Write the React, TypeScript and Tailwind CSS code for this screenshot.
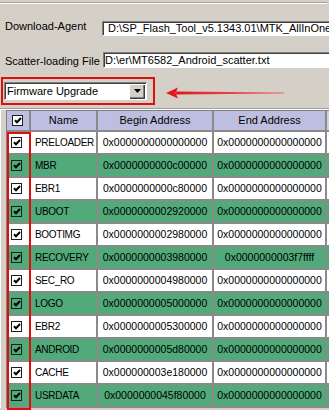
import React from "react";

const partitions: [string, string, string][] = [
  ["PRELOADER", "0x0000000000000000", "0x0000000000000000"],
  ["MBR", "0x0000000000c00000", "0x0000000000000000"],
  ["EBR1", "0x0000000000c80000", "0x0000000000000000"],
  ["UBOOT", "0x0000000002920000", "0x0000000000000000"],
  ["BOOTIMG", "0x0000000002980000", "0x0000000000000000"],
  ["RECOVERY", "0x0000000003980000", "0x0000000003f7ffff"],
  ["SEC_RO", "0x0000000004980000", "0x0000000000000000"],
  ["LOGO", "0x0000000005000000", "0x0000000000000000"],
  ["EBR2", "0x0000000005300000", "0x0000000000000000"],
  ["ANDROID", "0x0000000005d80000", "0x0000000000000000"],
  ["CACHE", "0x000000003e180000", "0x0000000000000000"],
  ["USRDATA", "0x0000000045f80000", "0x0000000000000000"],
];

const Check: React.FC<{ white?: boolean }> = ({ white }) => (
  <span
    className={`flex h-[11px] w-[11px] items-center justify-center border border-[#1c1c1c] ${
      white ? "bg-white" : ""
    }`}
  >
    <svg width="8" height="7" viewBox="0 0 8 7">
      <polyline
        points="1,3.2 3,5.3 7,1"
        fill="none"
        stroke="#000"
        strokeWidth="2"
      />
    </svg>
  </span>
);

const Field: React.FC<{ text: string; className?: string }> = ({
  text,
  className = "",
}) => (
  <div
    className={`flex w-[240px] shrink-0 items-center overflow-hidden whitespace-nowrap border border-t-[#808080] border-l-[#808080] border-b-white border-r-white bg-white shadow-[inset_1px_1px_0_#404040] ${className}`}
  >
    {text}
  </div>
);

const App: React.FC = () => {
  return (
    <div className="relative h-[410px] w-[329px] overflow-hidden bg-[#d4d0c8] font-['Liberation_Sans',Arial,sans-serif] text-[11px] leading-none text-black">
      <div className="mt-[2px] mr-[2px] h-[2px] border-t border-t-[#a0a0a0] border-b border-b-white" />

      {/* download agent */}
      <div className="mt-[17px] flex items-center">
        <div className="w-[102px] shrink-0 pb-[4px] pl-[5px]">Download-Agent</div>
        <Field
          className="h-[15px] pl-[5px]"
          text={"D:\\SP_Flash_Tool_v5.1343.01\\MTK_AllInOne_DA.bin"}
        />
      </div>

      {/* scatter file */}
      <div className="mt-[16px] flex items-center">
        <div className="w-[103px] shrink-0 pt-[3px] pl-[5px]">Scatter-loading File</div>
        <Field
          className="h-[16px] pl-[1px]"
          text={"D:\\er\\MT6582_Android_scatter.txt"}
        />
      </div>

      {/* mode select */}
      <div className="mt-[9px] flex items-start">
        <div className="ml-[1px] h-[28px] w-[154px] border-2 border-[#e00d0d] pt-[3px] pl-[1px]">
          <div className="flex h-[18px] w-[143px] items-center justify-between border border-t-[#808080] border-l-[#808080] border-b-white border-r-white bg-white pl-[1px] shadow-[inset_1px_1px_0_#404040]">
            <span className="pl-[1px]">Firmware Upgrade</span>
            <span className="mr-[1px] flex h-[15px] w-[16px] items-center justify-center bg-[#d4d0c8] shadow-[inset_1px_1px_0_#ffffff,inset_-1px_-1px_0_#404040,inset_-2px_-2px_0_#808080]">
              <svg width="7" height="4" viewBox="0 0 7 4">
                <polygon points="0,0 7,0 3.5,4" fill="#000" />
              </svg>
            </span>
          </div>
        </div>
        <svg className="mt-[10px] ml-[11px]" width="118" height="12" viewBox="0 0 118 12">
          <defs>
            <linearGradient id="fade" x1="0" x2="1" y1="0" y2="0">
              <stop offset="0" stopColor="#e3181c" />
              <stop offset="1" stopColor="#ea6b6b" />
            </linearGradient>
          </defs>
          <polygon points="10,4.6 118,5.4 118,6.6 10,7.4" fill="url(#fade)" />
          <polygon points="0,6 12,0.5 9.5,6 12,11.5" fill="#e3181c" />
        </svg>
      </div>

      <div className="mt-[3px] h-[2px] border-t border-t-[#a0a0a0] border-b border-b-white" />

      {/* partition table */}
      <div className="flex border-l border-l-white">
        <div className="ml-[5px] border-t border-l border-[#808080]">
          <div className="flex h-[21px] bg-[#bebee0]">
            <div className="flex w-[24px] shrink-0 items-center border-r-2 border-b-2 border-[#8a8a8a] pl-[5px]">
              <Check white />
            </div>
            <div className="flex w-[67px] shrink-0 items-center justify-center border-r-2 border-b-2 border-[#8a8a8a]">
              Name
            </div>
            <div className="flex w-[116px] shrink-0 items-center justify-center border-r-2 border-b-2 border-[#8a8a8a]">
              Begin Address
            </div>
            <div className="flex w-[113px] shrink-0 items-center justify-center border-r-2 border-b-2 border-[#8a8a8a]">
              End Address
            </div>
            <div className="w-[80px] shrink-0 border-b-2 border-[#8a8a8a] bg-[#cfcfe6]" />
          </div>

          {partitions.map(([name, begin, end], i) => {
            const bg = i % 2 === 0 ? "bg-white" : "bg-[#52aa7a]";
            return (
              <div key={name} className={`flex h-[23px] ${bg}`}>
                <div className="flex w-[24px] shrink-0 items-center border-r-2 border-b-2 border-[#8a8a8a] pl-[4px]">
                  <Check white={i % 2 === 0} />
                </div>
                <div className="flex w-[67px] shrink-0 items-center border-r-2 border-b-2 border-[#8a8a8a] pl-[4px] text-[10px] tracking-[-0.3px] whitespace-nowrap">
                  {name}
                </div>
                <div className="flex w-[116px] shrink-0 items-center justify-center border-r-2 border-b-2 border-[#8a8a8a] text-[10.5px] whitespace-nowrap">
                  {begin}
                </div>
                <div className="flex w-[113px] shrink-0 items-center justify-center border-r-2 border-b-2 border-[#8a8a8a] text-[10.5px] whitespace-nowrap">
                  {end}
                </div>
                <div className="w-[80px] shrink-0 border-b-2 border-[#8a8a8a]" />
              </div>
            );
          })}
        </div>
      </div>

      {/* highlight round the check column */}
      <div className="pointer-events-none absolute top-[132px] left-[7px] h-[278px] w-[24px] border-2 border-[#e00d0d]" />
    </div>
  );
};

export default App;
